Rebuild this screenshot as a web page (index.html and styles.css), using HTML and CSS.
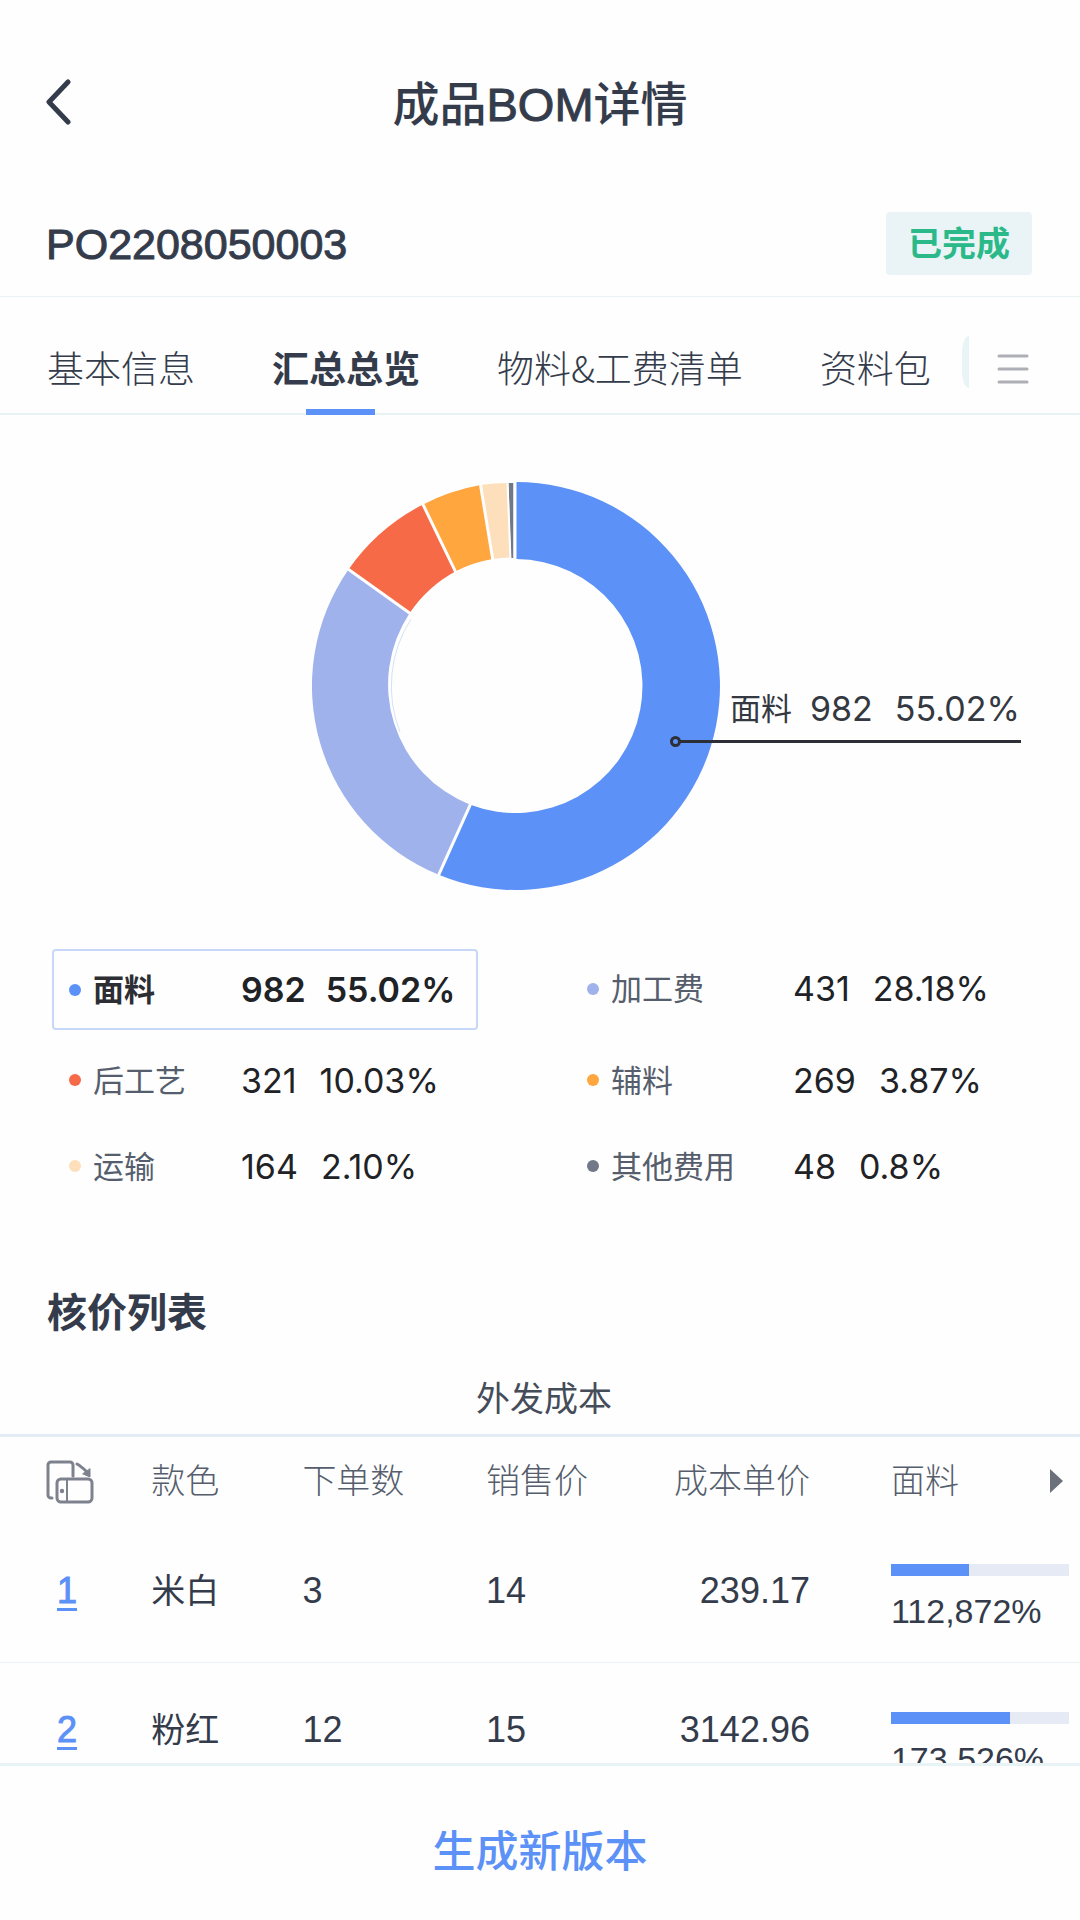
FILE: index.html
```html
<!DOCTYPE html>
<html lang="zh-CN">
<head>
<meta charset="utf-8">
<meta name="viewport" content="width=device-width, initial-scale=1">
<title>成品BOM详情</title>
<link rel="stylesheet" href="styles.css">
</head>
<body>
<div class="app">
  <header class="topbar">
    <button class="back" type="button" aria-label="返回">
      <svg width="26" height="48" viewBox="0 0 26 48" fill="none" stroke="currentColor" stroke-width="5" stroke-linecap="round" stroke-linejoin="round"><path d="M22 4 3 24 22 44"/></svg>
    </button>
    <h1 class="title">成品<span class="latin-medium">BOM</span>详情</h1>
  </header>

  <div class="order">
    <span class="order-no latin-medium">PO2208050003</span>
    <span class="badge">已完成</span>
  </div>

  <nav class="tabs">
    <a class="tab" href="#info">基本信息</a>
    <a class="tab tab-active" href="#summary" aria-current="page">汇总总览</a>
    <a class="tab" href="#materials">物料&amp;工费清单</a>
    <a class="tab" href="#files">资料包</a>
    <span class="tabs-edge"></span>
    <button class="menu" type="button" aria-label="更多">
      <svg width="32" height="32" viewBox="0 0 32 32" fill="none" stroke="currentColor" stroke-width="3" stroke-linecap="round"><path d="M2 3h28M2 16h28M2 29h28"/></svg>
    </button>
  </nav>

  <main class="content">
    <figure class="chart">
      <div class="donut">
        <svg class="donut-svg" viewBox="0 0 408 408" fill="none">
          <path fill="#5c91f7" d="M204 0A204 204 0 1 1 126.700 392.800L158.300 322.700A127 127 0 1 0 204 77Z"/>
          <path fill="#a0b2ec" d="M126.700 392.800A204 204 0 0 1 36.500 87.500L97.700 131A129 129 0 0 0 158.300 322.700Z"/>
          <path fill="#f66a47" d="M36.500 87.500A204 204 0 0 1 111 22.500L143.300 89.400A129 129 0 0 0 97.700 131Z"/>
          <path fill="#ffa63f" d="M111 22.500A204 204 0 0 1 168.500 3L180.700 77A129 129 0 0 0 143.300 89.400Z"/>
          <path fill="#fde0bb" d="M168.500 3A204 204 0 0 1 195 1L198 75.500A129 129 0 0 0 180.700 77Z"/>
          <path fill="#717887" d="M196.500 1H201.500V76H199Z"/>
          <path stroke="#fefefe" stroke-width="3" d="M203 0V79M125.900 394.600 159.100 320.900M34.900 86.300 99.300 132.200M110.100 20.700 144.200 91.200M168.200 1 181 79"/>
          <path stroke="#fefefe" stroke-width="2" d="M195.500 0 198.500 78"/>
          <path d="M99 137A125 125 0 0 0 88 250" stroke="#d3e2f6"/>
        </svg>
        <figcaption class="callout"><span class="callout-name">面料</span><span>982</span><span>55.02%</span></figcaption>
      </div>
    </figure>

    <ul class="legend">
      <li class="item item-top item-selected"><i class="dot dot-fabric"></i><span class="name">面料</span><span class="value">982</span><span>55.02%</span></li>
      <li class="item item-top"><i class="dot dot-process"></i><span class="name">加工费</span><span class="value">431</span><span>28.18%</span></li>
      <li class="item"><i class="dot dot-finish"></i><span class="name">后工艺</span><span class="value">321</span><span>10.03%</span></li>
      <li class="item"><i class="dot dot-trim"></i><span class="name">辅料</span><span class="value">269</span><span>3.87%</span></li>
      <li class="item"><i class="dot dot-freight"></i><span class="name">运输</span><span class="value">164</span><span>2.10%</span></li>
      <li class="item"><i class="dot dot-other"></i><span class="name">其他费用</span><span class="value">48</span><span>0.8%</span></li>
    </ul>

    <h2 class="section-title">核价列表</h2>
    <table class="prices">
      <caption>外发成本</caption>
      <thead>
        <tr>
          <th class="col-index">
            <button class="rotate" type="button" aria-label="横屏查看">
              <svg width="48" height="46" viewBox="0 0 48 46" fill="none" stroke="currentColor" stroke-width="3" stroke-linecap="round" stroke-linejoin="round"><path d="M6 40H5a3 3 0 0 1-3-3V7a3 3 0 0 1 3-3h19a3 3 0 0 1 3 3v11"/><path d="M31 6c4 2 7 5 10 8"/><path d="M44 11v8l-7-3z" fill="currentColor" stroke-width="1"/><rect x="11" y="21" width="35" height="23" rx="4"/><path d="M21 21v23" stroke-width="2"/><circle cx="16" cy="33" r="2.200" fill="currentColor" stroke="none"/></svg>
            </button>
          </th>
          <th class="col-color">款色</th>
          <th class="col-count">下单数</th>
          <th class="col-price">销售价</th>
          <th class="col-cost">成本单价</th>
          <th class="col-fabric"><span class="fabric-head">面料<svg width="13" height="24" viewBox="0 0 13 24" fill="#6b707b"><path d="M0 0 13 12 0 24z"/></svg></span></th>
        </tr>
      </thead>
      <tbody>
        <tr>
          <td class="col-index"><a class="index" href="#row-1">1</a></td>
          <td>米白</td>
          <td>3</td>
          <td>14</td>
          <td class="col-cost">239.17</td>
          <td class="col-fabric"><div class="bar"><div class="bar-fill" style="width:44%"></div></div><div class="share">112,872%</div></td>
        </tr>
        <tr>
          <td class="col-index"><a class="index" href="#row-2">2</a></td>
          <td>粉红</td>
          <td>12</td>
          <td>15</td>
          <td class="col-cost">3142.96</td>
          <td class="col-fabric"><div class="bar"><div class="bar-fill" style="width:67%"></div></div><div class="share">173,526%</div></td>
        </tr>
      </tbody>
    </table>
  </main>

  <footer class="footer">
    <button class="primary" type="button">生成新版本</button>
  </footer>
</div>
</body>
</html>
```
FILE: styles.css
```css
*,
*::before,
*::after {
  box-sizing: border-box;
}

body {
  margin: 0;
  background: #fefefe;
  color: #343c4c;
  font-family: "Liberation Sans", "Noto Sans CJK SC", sans-serif;
}

button {
  padding: 0;
  border: 0;
  background: none;
  color: inherit;
  font: inherit;
}

svg {
  display: block;
}

.app {
  display: flex;
  flex-direction: column;
  height: 100vh;
}

.latin-medium {
  -webkit-text-stroke: 1px currentColor;
}

/* Header */
.topbar {
  display: grid;
  grid-template-columns: 48px 1fr 48px;
  align-items: center;
  height: 204px;
  padding: 0 46px;
  flex: none;
}

.title {
  margin: 0;
  padding-top: 6px;
  text-align: center;
  font-size: 47px;
  line-height: 56px;
  font-weight: 500;
}

.order {
  display: flex;
  align-items: center;
  justify-content: space-between;
  flex: none;
  height: 93px;
  padding: 0 48px 14px 46px;
  border-bottom: 1px solid #e8f3f5;
}

.order-no {
  padding-top: 2px;
  font-size: 43px;
  line-height: 60px;
}

.badge {
  padding: 2px 22px 0;
  border-radius: 4px;
  background: #eaf4f6;
  color: #2cb98a;
  font-size: 34px;
  line-height: 61px;
  font-weight: 700;
}

/* Tabs */
.tabs {
  display: flex;
  align-items: flex-end;
  flex: none;
  height: 118px;
  padding: 0 51px 0 47px;
  border-bottom: 2px solid #e8f3f5;
}

.tab {
  position: relative;
  margin-right: 77px;
  color: inherit;
  font-family: "Noto Sans CJK SC", sans-serif;
  font-size: 37px;
  line-height: 92px;
  font-weight: 300;
  text-decoration: none;
  white-space: nowrap;
}

.tab:last-of-type {
  margin-right: 31px;
}

.tab-active {
  font-weight: 700;
}

.tab-active::after {
  content: "";
  position: absolute;
  left: 34px;
  bottom: -2px;
  width: 69px;
  height: 6px;
  background: #5c91f7;
}

.tabs-edge {
  width: 7px;
  height: 52px;
  margin-bottom: 25px;
  border-radius: 7px 0 0 7px / 16px 0 0 16px;
  background: #e8f4f5;
}

.menu {
  margin-left: auto;
  margin-bottom: 28px;
  color: #adafb5;
}

/* Donut */
.content {
  flex: 1;
  min-height: 0;
  overflow-x: hidden;
  overflow-y: auto;
  scrollbar-width: none;
}

.chart {
  display: flex;
  justify-content: center;
  margin: 0;
  padding: 67px 48px 59px 0;
}

.donut {
  position: relative;
  width: 408px;
}

.callout {
  position: absolute;
  left: 367px;
  top: 194px;
  display: flex;
  align-items: center;
  gap: 22px;
  width: 342px;
  padding: 4px 0 2px 51px;
  border-bottom: 3px solid #2c2f35;
  color: #343840;
  font-family: Inter, "Noto Sans CJK SC", sans-serif;
  font-size: 34px;
  line-height: 58px;
}

.callout-name {
  margin-right: -4px;
  font-size: 31px;
}

.callout::before {
  content: "";
  position: absolute;
  left: -9px;
  bottom: -7px;
  width: 11px;
  height: 11px;
  border: 3px solid #2c2f35;
  border-radius: 50%;
}

/* Legend */
.legend {
  display: grid;
  grid-template-columns: 1fr 1fr;
  grid-template-rows: 89px 86px 86px;
  column-gap: 8px;
  margin: 0;
  padding: 0 0 0 52px;
  list-style: none;
  color: #202226;
  font-family: Inter, "Noto Sans CJK SC", sans-serif;
  font-size: 34px;
}

.item {
  display: flex;
  align-items: center;
  height: 86px;
  padding: 0 0 2px 17px;
}

.item-top {
  height: 81px;
}

.item-selected {
  justify-self: start;
  padding: 0 21px 0 15px;
  border: 2px solid #c6d7f8;
  border-radius: 4px;
  font-weight: 600;
}

.dot {
  width: 12px;
  height: 12px;
  margin-right: 12px;
  border-radius: 50%;
}

.dot-fabric { background: #5c91f7; }
.dot-process { background: #a0b2ec; }
.dot-finish { background: #f66a47; }
.dot-trim { background: #ffa63f; }
.dot-freight { background: #fde0bb; }
.dot-other { background: #717887; }

.name {
  width: 148px;
  padding-bottom: 4px;
  color: #565e6d;
  font-size: 31px;
}

.item:nth-child(even) .name {
  width: 182px;
}

.item-selected .name {
  color: #2c2e33;
}

.value {
  margin-right: 23px;
}

.item-selected .value {
  margin-right: 20px;
}

/* Price table */
.section-title {
  margin: 0;
  padding: 73px 47px 0;
  font-size: 40px;
  line-height: 60px;
  font-weight: 700;
}

.prices {
  width: 100%;
  border-collapse: collapse;
  table-layout: fixed;
  font-size: 36px;
}

.prices caption {
  padding: 22px 0 0 8px;
  border-bottom: 3px solid #e4ecf5;
  color: #454c5a;
  font-size: 34px;
  line-height: 69px;
}

.prices th {
  height: 87px;
  padding: 0;
  color: #565e6d;
  font-size: 34px;
  line-height: 50px;
  font-weight: 300;
  text-align: left;
}

.prices td {
  height: 138px;
  padding: 42px 0 0;
  line-height: 50px;
  vertical-align: top;
}

.prices tbody tr + tr {
  border-top: 1px solid #e8f3f5;
}

.prices td:nth-child(2) {
  font-size: 34px;
}

.prices .col-index { width: 14%; padding-left: 46px; }
.prices .col-color { width: 14%; }
.prices .col-count { width: 17%; }
.prices .col-price { width: 14%; }
.prices .col-cost { width: 16%; text-align: right; }
.prices .col-fabric { width: 25%; padding-left: 81px; padding-right: 11px; }
.prices td.col-fabric { padding-top: 40px; }
.prices tr + tr td.col-fabric { padding-top: 49px; }

.rotate {
  display: block;
  color: #7d828e;
}

.fabric-head {
  display: flex;
  align-items: center;
  justify-content: space-between;
  padding-right: 6px;
}

.index {
  display: inline-block;
  margin-left: 11px;
  color: #5c91f7;
  -webkit-text-stroke: 1px currentColor;
  text-decoration: underline;
  text-decoration-thickness: 3px;
  text-underline-offset: 5px;
}

.bar {
  height: 12px;
  background: #e5eaf5;
}

.bar-fill {
  height: 12px;
  background: #5c91f7;
}

.share {
  padding-top: 11px;
  font-size: 34px;
  line-height: 48px;
}

/* Footer action */
.footer {
  display: flex;
  flex: none;
  height: 157px;
  padding-top: 18px;
  border-top: 3px solid #e8f3f5;
}

.primary {
  flex: 1;
  color: #5c91f7;
  font-size: 43px;
  line-height: 60px;
  font-weight: 500;
}
```
